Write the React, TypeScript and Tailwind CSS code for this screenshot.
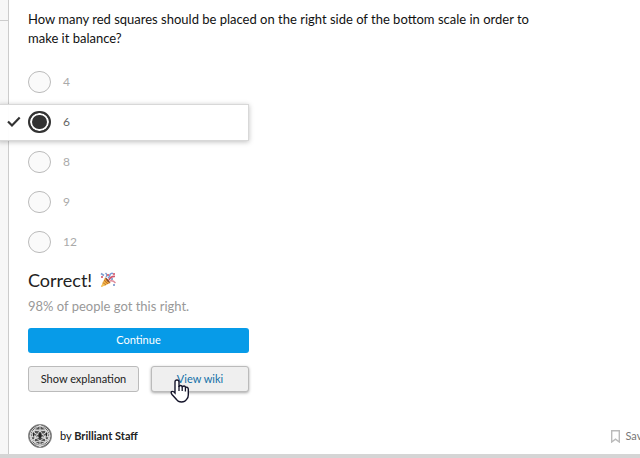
import { useState } from 'react';

const choices = ['4', '6', '8', '9', '12'];

function Check() {
  return (
    <svg className="h-3 w-3.5 shrink-0" viewBox="0 0 14 12" fill="none" stroke="#333" strokeWidth="2.2" aria-hidden="true">
      <path d="M1 5.5 5 9.5 12.7 1.6" />
    </svg>
  );
}

function Party() {
  return (
    <svg className="h-4 w-4" viewBox="0 0 16 16" role="img" aria-label="Celebration">
      <path d="M1 15 5 5.5 10.5 11Z" fill="#e9a43c" />
      <path d="M1 15 3.5 9 6.5 13Z" fill="#f5c35c" />
      <path d="M5 5.5Q8 6 10.5 11Q7 10.5 5 5.5" fill="#8c4b2f" />
      <path d="M2.8 10.5 6 13M4 8 8 12" stroke="#c77724" strokeWidth="1" />
      <path d="M1 1.5 4 3.5M5.5 1Q8 3 6 5" stroke="#7f9fcf" strokeWidth="1.6" fill="none" />
      <path d="M8 6Q10 5 10 2.5 12 0 14 2.5" stroke="#7a9bd5" strokeWidth="1.5" fill="none" />
      <path d="M9 8Q11 4 15 4.5" stroke="#d2566c" strokeWidth="1.7" fill="none" />
      <path d="M10 9Q13 8 15.5 11" stroke="#e08d9b" strokeWidth="1.5" fill="none" />
      <path d="M1 4h2v2H1zM7 2h2v2H7zM13 1h2v2h-2z" fill="#dc7685" />
      <path d="M11 6h2v2h-2zM13 12h2v2h-2z" fill="#90a9d5" />
    </svg>
  );
}

function Avatar() {
  return (
    <svg className="size-6 shrink-0" viewBox="0 0 24 24" fill="none" aria-hidden="true">
      <circle cx="12" cy="12" r="11.5" fill="#555" stroke="#8a8a8a" />
      <g stroke="#e2e2e2" strokeWidth="0.9">
        <circle cx="12" cy="12" r="10" />
        <path d="M12 1 18 6 22 12 18 18 12 23 6 18 2 12 6 6Z" />
        <path d="M6 6H18L21 16 12 21 3 16Z" />
        <path d="M12 1V7L6 6 7 13 2 12M12 7 18 6 17 13 22 12M7 13 12 7 17 13 12 17ZM7 13 6 18 12 17 18 18 17 13M12 17V23M7 13H17M3 7 12 12 21 7M3 17 12 12 21 17" />
      </g>
      <path d="M12 8 14 12 12 15 10 12ZM5 8l2 2-2 3zM19 8l-2 2 2 3z" fill="#222" />
    </svg>
  );
}

function Pointer() {
  return (
    <svg className="pointer-events-none absolute top-3 left-[18px] h-6 w-5" viewBox="0 0 20 24" aria-hidden="true">
      <path
        d="M5 14V3Q5 1 7 1T9 3V8Q9 6.5 10.5 6.5T12.3 8Q12.5 7 14 7T15.5 9Q16 8 17 8.2T18.3 10V16Q18.3 19 16.5 20.5 15 23 11.5 23 8 23 6.5 20.5L2 15.5Q.6 13.5 1.6 12.6 3 11.8 5 14Z"
        fill="#fff"
        stroke="#15152b"
        strokeWidth="1.4"
      />
      <path d="M9 7V12M12.2 8V12M15.4 9V12.5" stroke="#15152b" strokeWidth="1.3" />
    </svg>
  );
}

export default function App() {
  const [answer, setAnswer] = useState('6');
  return (
    <div className="flex min-h-screen flex-col overflow-hidden bg-white font-['Lato',sans-serif] text-[#111]">
      <div className="flex grow">
        <aside className="w-[9px] shrink-0 border-r border-[#ccc] bg-[#f7f7f7]">
          <div className="h-[21px] border-b border-[#ccc]" />
        </aside>
        <main className="flex min-w-0 grow flex-col pt-[10px] pl-[19px]">
          <p className="max-w-[520px] text-[13px] leading-[19px]">
            How many red squares should be placed on the right side of the bottom scale in order to make it balance?
          </p>
          <fieldset className="mt-3.5 w-[221px]">
            {choices.map((choice) => {
              const selected = choice === answer;
              return (
                <div key={choice} className="flex h-10 items-center">
                  <label
                    className={
                      selected
                        ? '-ml-[30px] flex h-[37px] grow items-center border border-[#d8d8d8] bg-white/95 pl-2 text-[#666] shadow-[0_1px_5px_rgba(0,0,0,0.25)]'
                        : 'flex h-[37px] grow items-center text-[#aaa]'
                    }
                  >
                    {selected && (
                      <span className="flex w-[21px] shrink-0">
                        <Check />
                      </span>
                    )}
                    <input
                      type="radio"
                      name="answer"
                      value={choice}
                      checked={selected}
                      onChange={() => setAnswer(choice)}
                      className="h-[22px] w-[23px] shrink-0 appearance-none rounded-full border border-[#bbb] bg-[#fafafa] checked:border-2 checked:border-[#333] checked:bg-[#333] checked:shadow-[inset_0_0_0_2px_#fff]"
                    />
                    <span className="ml-3 text-xs">{choice}</span>
                  </label>
                </div>
              );
            })}
          </fieldset>
          <section className="w-[221px]">
            <h2 className="mt-1.5 flex h-6 items-center gap-2 text-lg leading-6 text-[#222]">
              Correct! <Party />
            </h2>
            <p className="mt-1 text-[13px] leading-5 whitespace-nowrap text-[#999]">98% of people got this right.</p>
            <button className="mt-3 h-[25px] w-full rounded-[3px] bg-[#079be8] text-[11px] text-white">Continue</button>
            <div className="mt-[13px] flex gap-3 text-[11px]">
              <button className="h-[26px] w-[111px] rounded-[3px] border border-[#bbb] bg-[#efefef] text-[#222]">
                Show explanation
              </button>
              <button className="relative h-[26px] grow rounded-[3px] border border-[#bbb] bg-[#efefef] text-[#126fa8] shadow-[0_1px_3px_rgba(0,0,0,0.35)]">
                View wiki
                <Pointer />
              </button>
            </div>
          </section>
          <footer className="-mr-2 mt-8 mb-1.5 flex h-6 items-center justify-between text-[11px]">
            <div className="flex items-center gap-2">
              <Avatar />
              <span>
                by <strong className="text-[#222]">Brilliant Staff</strong>
              </span>
            </div>
            <button className="flex items-center gap-[5px] text-[#777]">
              <svg className="h-[13px] w-[9px]" viewBox="0 0 9 13" fill="none" stroke="#bbb" strokeWidth="1.4" aria-hidden="true">
                <path d="M.7.7H8.3V12L4.5 9.2.7 12Z" />
              </svg>
              Save
            </button>
          </footer>
        </main>
      </div>
      <div className="h-1 bg-[#d5d5d5]" />
    </div>
  );
}
